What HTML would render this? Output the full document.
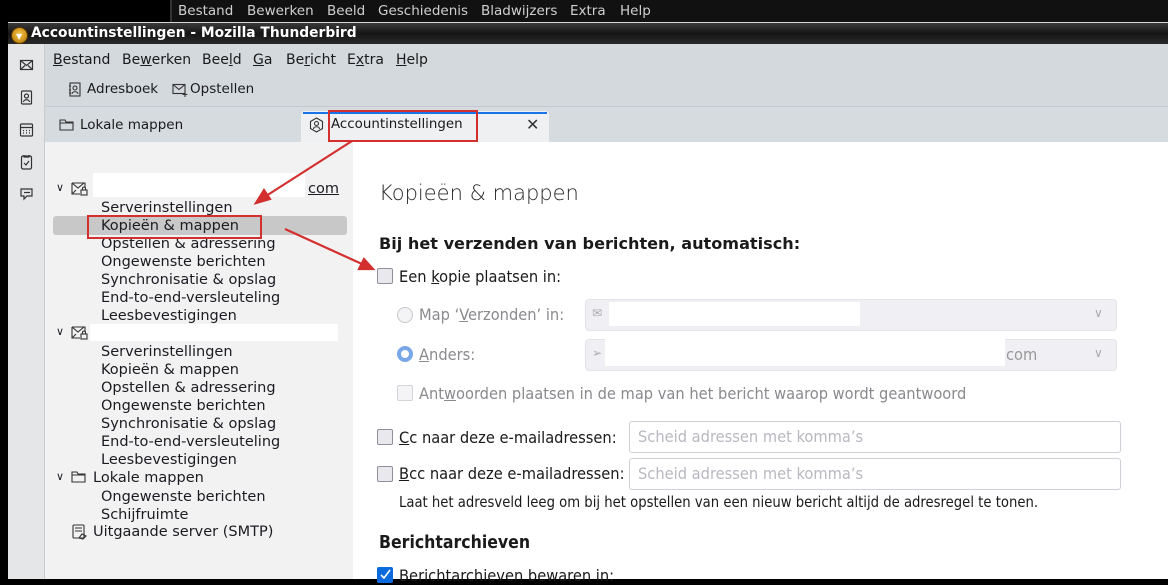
<!DOCTYPE html><html><head><meta charset="utf-8"><style>
*{margin:0;padding:0;box-sizing:border-box}
body{width:1168px;height:579px;overflow:hidden;background:#000;font-family:"DejaVu Sans","Liberation Sans",sans-serif;position:relative;color:#1a1a1a}
.a{position:absolute;white-space:nowrap}
u{text-decoration:underline}
.tree{font-size:14.5px;color:#1c1b22}
.c{font-family:"DejaVu Sans Condensed","DejaVu Sans",sans-serif;font-size:16.3px}
.cb{position:absolute;width:16px;height:16px;border:1px solid #8f8f9d;border-radius:2px;background:#e9e9ed}
.sel{position:absolute;background:#f0f0f4;border:1px solid #e4e4e8;border-radius:4px}
.inp{position:absolute;background:#fff;border:1px solid #cfcfd8;border-radius:3px;color:#b8b8c0;font-family:"DejaVu Sans Condensed","DejaVu Sans",sans-serif;font-size:16.3px;padding:5px 8px}
.m{position:absolute;top:52px;font-size:14px}
.t{position:absolute;top:3px;font-size:13.5px;color:#d0d0d0}
</style></head><body>
<div class="a" style="left:170px;top:0;width:998px;height:22px;background:#111;border-left:2px solid #333"></div>
<span class="t" style="left:178px">Bestand</span><span class="t" style="left:247px">Bewerken</span><span class="t" style="left:327px">Beeld</span><span class="t" style="left:378px">Geschiedenis</span><span class="t" style="left:481px">Bladwijzers</span><span class="t" style="left:570px">Extra</span><span class="t" style="left:620px">Help</span>
<div class="a" style="left:8px;top:22px;width:1160px;height:557px;background:#d4d9de"></div>
<div class="a" style="left:8px;top:23px;width:1160px;height:21px;background:linear-gradient(#3a3a3a,#151515 50%,#2a2a2a)"></div>
<div class="a" style="left:11px;top:27px;width:17px;height:17px;border-radius:50%;background:radial-gradient(circle at 50% 40%,#f7c24a,#b07400);border:1px solid #5a3a00"></div>
<div class="a" style="left:16px;top:32px;color:#fff;font-size:8px">▼</div>
<div class="a" style="left:31px;top:25px;color:#fff;font-weight:bold;font-size:13.8px">Accountinstellingen - Mozilla Thunderbird</div>
<div class="a" style="left:8px;top:44px;width:37px;height:535px;background:#e4e6e8;border-right:1px solid #c8cbd0"></div>
<svg class="a" style="left:19px;top:57px" width="16" height="130" viewBox="0 0 16 130" fill="none" stroke="#333" stroke-width="1.2">
<rect x="1.5" y="3.5" width="12" height="9"/><path d="M1.5 3.5l6 5 6-5M1.5 12.5l4.5-4M13.5 12.5l-4.5-4"/>
<rect x="2.5" y="34" width="10" height="13" rx="1"/><circle cx="7.5" cy="39" r="2"/><path d="M4.5 45c0-3 6-3 6 0"/>
<rect x="1.5" y="67" width="12" height="12" rx="1"/><path d="M1.5 70.5h12M4 73.5h1M7 73.5h1M10 73.5h1M4 76h1M7 76h1M10 76h1"/>
<rect x="2.5" y="99" width="10" height="13" rx="1.5"/><path d="M5 98v2h5v-2M5 106l2 2 3-4"/>
</svg>
<svg class="a" style="left:19px;top:187px" width="16" height="16" fill="none" stroke="#333" stroke-width="1.2"><path d="M2 2h11v7H8l-3 3V9H2z"/><path d="M5 5.5h6"/></svg>
<span class="m" style="left:53px"><u>B</u>estand</span><span class="m" style="left:122px">Be<u>w</u>erken</span><span class="m" style="left:202px">Bee<u>l</u>d</span><span class="m" style="left:253px"><u>G</u>a</span><span class="m" style="left:286px">Be<u>r</u>icht</span><span class="m" style="left:347px">E<u>x</u>tra</span><span class="m" style="left:396px"><u>H</u>elp</span>
<svg class="a" style="left:68px;top:82px" width="14" height="15" fill="none" stroke="#333" stroke-width="1.1"><rect x="2" y="1" width="10" height="13"/><circle cx="7" cy="6" r="2"/><path d="M4 12c0-3 6-3 6 0M1 4h2M1 8h2M1 11h2"/></svg>
<div class="a" style="left:87px;top:81px;font-size:13.5px">Adresboek</div>
<svg class="a" style="left:172px;top:83px" width="16" height="14" fill="none" stroke="#333" stroke-width="1.1"><rect x="1" y="1.5" width="12" height="9"/><path d="M1 1.5l6 5 6-5M13 9v5M10.5 11.5h5"/></svg>
<div class="a" style="left:190px;top:81px;font-size:13.5px">Opstellen</div>
<div class="a" style="left:45px;top:106px;width:1123px;height:36px;background:#d6dbe0;border-top:1px solid #c4c9cf"></div>
<svg class="a" style="left:59px;top:118px" width="15" height="13" fill="none" stroke="#333" stroke-width="1.1"><path d="M1 2h5l1 2h7v8H1z M1 5h13"/></svg>
<div class="a" style="left:80px;top:117px;font-size:13.5px">Lokale mappen</div>
<div class="a" style="left:301px;top:111px;width:248px;height:31px;background:#eef0f2;border-radius:4px 4px 0 0"></div>
<div class="a" style="left:303px;top:112px;width:244px;height:2px;background:#1a73e8"></div>
<svg class="a" style="left:309px;top:117px" width="15" height="16" fill="none" stroke="#333" stroke-width="1.1"><path d="M7.5 1l6 3.5v7l-6 3.5-6-3.5v-7z"/><circle cx="7.5" cy="6.5" r="2"/><path d="M4.5 12c0-3 6-3 6 0"/></svg>
<div class="a" style="left:331px;top:117px;font-size:13.4px">Accountinstellingen</div>
<div class="a" style="left:526px;top:115px;font-size:16px;color:#333">✕</div>
<div class="a" style="left:45px;top:142px;width:308px;height:437px;background:#f2f2f2"></div>
<div class="a" style="left:353px;top:142px;width:815px;height:437px;background:#fff"></div>
<div class="a" style="left:93px;top:173px;width:212px;height:24px;background:#fff"></div>
<div class="a" style="left:90px;top:324px;width:248px;height:17px;background:#fff"></div>
<div class="a" style="left:53px;top:216px;width:294px;height:19px;background:#c8c8c8;border-radius:3px"></div>
<div class="a tree" style="left:56px;top:181px;font-size:11px">∨</div>
<div class="a tree" style="left:56px;top:325px;font-size:11px">∨</div>
<div class="a tree" style="left:56px;top:470px;font-size:11px">∨</div>
<svg class="a" style="left:71px;top:182px" width="17" height="14" fill="none" stroke="#333" stroke-width="1.1"><path d="M1 1h13v5M1 1v11h8M1 1l6 5 6-5M1 12l4-4"/><rect x="10" y="8" width="6" height="5"/><path d="M11.5 8V6.5a1.5 1.5 0 013 0V8"/></svg>
<svg class="a" style="left:71px;top:326px" width="17" height="14" fill="none" stroke="#333" stroke-width="1.1"><path d="M1 1h13v5M1 1v11h8M1 1l6 5 6-5M1 12l4-4"/><rect x="10" y="8" width="6" height="5"/><path d="M11.5 8V6.5a1.5 1.5 0 013 0V8"/></svg>
<svg class="a" style="left:71px;top:470px" width="15" height="13" fill="none" stroke="#333" stroke-width="1.1"><path d="M1 2h5l1 2h7v8H1z M1 5h13"/></svg>
<svg class="a" style="left:71px;top:524px" width="16" height="16" fill="none" stroke="#333" stroke-width="1.1"><rect x="2" y="1" width="11" height="13" rx="1"/><path d="M4 4h7M4 7h7M8 14l3-4 4 2-3 3z"/></svg>
<div class="a tree" style="left:308px;top:181px"><u>com</u></div>
<div class="a tree" style="left:101px;top:199px;line-height:18px">Serverinstellingen<br>Kopieën &amp; mappen<br>Opstellen &amp; adressering<br>Ongewenste berichten<br>Synchronisatie &amp; opslag<br>End-to-end-versleuteling<br>Leesbevestigingen</div>
<div class="a tree" style="left:101px;top:343px;line-height:18px">Serverinstellingen<br>Kopieën &amp; mappen<br>Opstellen &amp; adressering<br>Ongewenste berichten<br>Synchronisatie &amp; opslag<br>End-to-end-versleuteling<br>Leesbevestigingen</div>
<div class="a tree" style="left:93px;top:470px">Lokale mappen</div>
<div class="a tree" style="left:101px;top:488px;line-height:18px">Ongewenste berichten<br>Schijfruimte</div>
<div class="a tree" style="left:93px;top:524px">Uitgaande server (SMTP)</div>
<div class="a" style="left:379px;top:181px;font-size:21px;font-weight:300;color:#2a2a2e">Kopieën &amp; mappen</div>
<div class="a" style="left:379px;top:234px;font-size:16.1px;font-weight:bold">Bij het verzenden van berichten, automatisch:</div>
<div class="cb" style="left:377px;top:268px"></div>
<div class="a c" style="left:399px;top:267px">Een <u>k</u>opie plaatsen in:</div>
<div class="a" style="left:397px;top:307px;width:16px;height:16px;border-radius:50%;border:1px solid #c8c8cc;background:#f4f4f6"></div>
<div class="a c" style="left:419px;top:305px;color:#8a8a8e">Map ‘<u>V</u>erzonden’ in:</div>
<div class="sel" style="left:585px;top:299px;width:532px;height:32px"></div>
<div class="a" style="left:609px;top:302px;width:251px;height:24px;background:#fff"></div>
<div class="a" style="left:592px;top:306px;color:#aaa;font-size:12px">✉</div>
<div class="a" style="left:1094px;top:306px;color:#aaa;font-size:12px">∨</div>
<div class="a" style="left:397px;top:346px;width:16px;height:16px;border-radius:50%;border:4px solid #7aa7e8;background:#fff"></div>
<div class="a c" style="left:419px;top:345px;color:#8a8a8e"><u>A</u>nders:</div>
<div class="sel" style="left:585px;top:339px;width:532px;height:32px"></div>
<div class="a" style="left:605px;top:339px;width:400px;height:27px;background:#fff"></div>
<div class="a" style="left:592px;top:346px;color:#aaa;font-size:12px">➢</div>
<div class="a c" style="left:1006px;top:345px;color:#999">com</div>
<div class="a" style="left:1094px;top:346px;color:#aaa;font-size:12px">∨</div>
<div class="cb" style="left:397px;top:385px;border-color:#d4d4d8;background:#f4f4f6"></div>
<div class="a c" style="left:419px;top:384px;color:#8a8a8e">Ant<u>w</u>oorden plaatsen in de map van het bericht waarop wordt geantwoord</div>
<div class="cb" style="left:377px;top:429px"></div>
<div class="a c" style="left:399px;top:428px"><u>C</u>c naar deze e-mailadressen:</div>
<div class="inp" style="left:629px;top:421px;width:492px;height:32px">Scheid adressen met komma’s</div>
<div class="cb" style="left:377px;top:466px"></div>
<div class="a c" style="left:399px;top:464px"><u>B</u>cc naar deze e-mailadressen:</div>
<div class="inp" style="left:629px;top:458px;width:492px;height:32px">Scheid adressen met komma’s</div>
<div class="a c" style="left:399px;top:494px;font-size:14.7px">Laat het adresveld leeg om bij het opstellen van een nieuw bericht altijd de adresregel te tonen.</div>
<div class="a" style="left:379px;top:533px;font-size:17.5px;font-weight:bold;font-family:'DejaVu Sans Condensed','DejaVu Sans',sans-serif">Berichtarchieven</div>
<div class="cb" style="left:377px;top:567px;background:#0b6bdc;border-color:#0b6bdc"></div>
<svg class="a" style="left:378px;top:568px" width="14" height="11"><path d="M3 7l3 3 6-8" stroke="#fff" stroke-width="1.6" fill="none"/></svg>
<div class="a c" style="left:399px;top:566px">Berichtarchieven bewaren in:</div>
<div class="a" style="left:328px;top:110px;width:150px;height:32px;border:2px solid #d32f2f"></div>
<div class="a" style="left:87px;top:215px;width:175px;height:24px;border:2px solid #d32f2f"></div>
<svg class="a" style="left:0;top:0" width="1168" height="579"><g stroke="#d32f2f" stroke-width="2.2" fill="#d32f2f">
<line x1="352" y1="141" x2="266" y2="196"/><polygon points="256,203 264,190 270,199"/>
<line x1="285" y1="229" x2="362" y2="264"/><polygon points="373,269 359,269 364,259"/></g></svg>
</body></html>
